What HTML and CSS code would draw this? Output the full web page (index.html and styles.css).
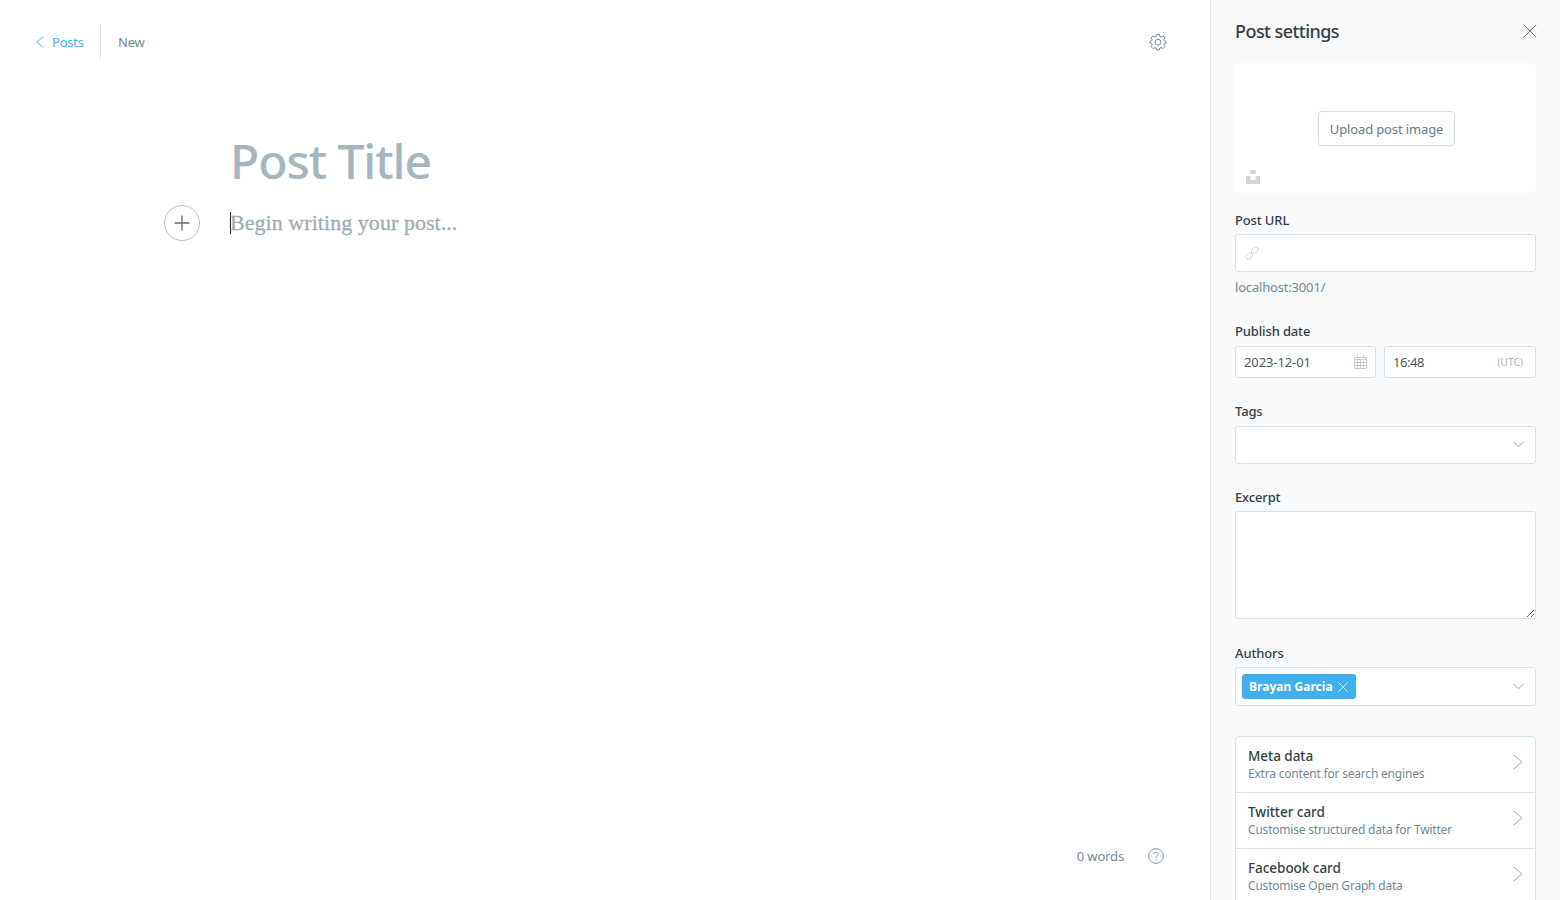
FILE: index.html
```html
<!DOCTYPE html>
<html lang="en">
<head>
<meta charset="utf-8">
<title>New post</title>
<link rel="stylesheet" href="styles.css">
</head>
<body>
<div class="app">
  <main class="editor">
    <header class="topbar">
      <a class="back"><svg class="back-icon" width="8" height="12" viewBox="0 0 8 12"><path d="M7.500 .5 .7 6 7.500 11.500"/></svg><span class="t-posts">Posts</span></a>
      <span class="divider"></span>
      <span class="status t-new">New</span>
      <svg class="gear" width="18" height="18" viewBox="0 0 18 18"><path d="M7.600 1.500h2.800l.6 2.100 1.100.5 2-1.100 1.800 1.900-1.100 1.900.5 1.100 1.700.5v1.700l-1.700.6-.5 1.100 1.100 1.900-1.900 1.900-1.900-1.100-1.100.5-.6 1.900H7.600L7 15l-1.100-.5-1.900 1.100-1.900-1.900 1.100-1.900-.5-1.100-1.700-.6V8.400l1.700-.5.5-1.100-1.100-1.900L4 3l1.900 1.100L7 3.600z"/><circle cx="9" cy="9.200" r="2.900"/></svg>
    </header>
    <section class="writing">
      <h1 class="title"><span class="t-title">Post Title</span></h1>
      <div class="body-row">
        <span class="plus"><svg width="16" height="16" viewBox="0 0 16 16"><path d="M8 .5v15M.5 8h15"/></svg></span>
        <span class="caret"></span><span class="placeholder t-begin">Begin writing your post...</span>
      </div>
    </section>
    <footer class="bottom">
      <span class="t-words">0 words</span>
      <svg class="help" width="16" height="16" viewBox="0 0 17 17"><circle cx="8.500" cy="8.500" r="7.800"/><path d="M6.200 6.700c0-3 4.700-2.900 4.700 0 0 1.600-2.400 1.600-2.400 3.500M8.500 11.600v1.200"/></svg>
    </footer>
  </main>
  <aside class="settings">
    <div class="head"><h2><span class="t-settings">Post settings</span></h2><svg width="14" height="14" viewBox="0 0 14 14"><path d="M.8.8l12.400 12.400M13.200.8.8 13.200"/></svg></div>
    <div class="uploader">
      <span class="upload-btn"><span class="t-upload">Upload post image</span></span>
      <svg class="unsplash" width="14" height="14" viewBox="0 0 14 14"><path d="M4.400 0h5.200v4H4.400zM0 6h4.400v4h5.200V6H14v8H0z"/></svg>
    </div>
    <div class="field url">
      <label><span class="t-url">Post URL</span></label>
      <div class="input tall"><svg class="link" width="14" height="14" viewBox="0 0 14 14"><rect x="-3.600" y="-2.400" width="7.200" height="4.800" rx="2.400" transform="translate(4.200 9.800) rotate(-45)"/><rect x="-3.600" y="-2.400" width="7.200" height="4.800" rx="2.400" transform="translate(9.800 4.200) rotate(-45)"/><path d="M5 9l4-4"/></svg></div>
      <p class="hint"><span class="t-host">localhost:3001/</span></p>
    </div>
    <div class="field date">
      <label><span class="t-pub">Publish date</span></label>
      <div class="pair">
        <div class="input short d"><span class="t-date">2023-12-01</span><svg class="cal" width="13" height="14" viewBox="0 0 13 14"><path d="M.5 2.500h12v11H.5zM.5 4.500h12M.5 7.500h12M.5 10.500h12M3.500 4.500v9M6.500 4.500v9M9.500 4.500v9M3.500.5v2.500M9.500.5v2.500"/></svg></div>
        <div class="input short"><span class="t-time">16:48</span><span class="utc t-utc">(UTC)</span></div>
      </div>
    </div>
    <div class="field tags">
      <label><span class="t-tags">Tags</span></label>
      <div class="input tall select"><svg class="chev" width="11" height="7" viewBox="0 0 11 7"><path d="M.5.8l5 5 5-5"/></svg></div>
    </div>
    <div class="field excerpt">
      <label><span class="t-exc">Excerpt</span></label>
      <textarea class="area"></textarea>
    </div>
    <div class="field authors">
      <label><span class="t-auth">Authors</span></label>
      <div class="input author-box select"><span class="token"><span class="t-name">Brayan Garcia</span><svg width="10" height="10" viewBox="0 0 10 10"><path d="M.5.5l9 9M9.500.5l-9 9"/></svg></span><svg class="chev" width="11" height="7" viewBox="0 0 11 7"><path d="M.5.8l5 5 5-5"/></svg></div>
    </div>
    <nav class="cards">
      <a class="card"><span class="card-text"><b class="t-c1">Meta data</b><span class="sub t-s1">Extra content for search engines</span></span><svg width="10" height="16" viewBox="0 0 10 16"><path d="M.8 1l8.200 7-8.200 7"/></svg></a>
      <a class="card"><span class="card-text"><b class="t-c2">Twitter card</b><span class="sub t-s2">Customise structured data for Twitter</span></span><svg width="10" height="16" viewBox="0 0 10 16"><path d="M.8 1l8.200 7-8.200 7"/></svg></a>
      <a class="card"><span class="card-text"><b class="t-c3">Facebook card</b><span class="sub t-s3">Customise Open Graph data</span></span><svg width="10" height="16" viewBox="0 0 10 16"><path d="M.8 1l8.200 7-8.200 7"/></svg></a>
    </nav>
  </aside>
</div>
</body>
</html>
```
FILE: styles.css
```css
* { box-sizing: border-box; }
body { margin: 0; font-family: "Noto Sans", "Open Sans", sans-serif; font-size: 13px; color: #738a94; background: #fff; }
svg { display: block; fill: none; stroke: currentColor; flex: none; }
h1, h2, p { margin: 0; }
.app { display: flex; height: 900px; overflow: hidden; }
.editor { flex: 1; display: flex; flex-direction: column; }
.topbar { display: flex; align-items: center; height: 36px; margin: 24px 43px 0 36px; }
.back { display: flex; align-items: center; gap: 8px; color: #3eb0ef; width: 64px; }
.back-icon { stroke-width: .9; }
.t-posts, .t-new { letter-spacing: -.2px; }
.divider { width: 1px; height: 36px; background: #dfe9f1; margin-right: 17px; }
.gear { margin-left: auto; stroke: #738a94; stroke-width: 1; }
.writing { flex: 1; padding: 66px 0 0 230px; }
.title { font-size: 48px; line-height: 70px; font-weight: 500; color: #a6b5bd; height: 79px; letter-spacing: -1.070px; }
.body-row { display: flex; align-items: center; height: 36px; margin-left: -66px; }
.plus { width: 36px; height: 36px; border: 1px solid #b0c2cb; border-radius: 50%; display: grid; place-items: center; color: #5a6e78; margin-right: 30px; }
.plus svg { stroke-width: 1.300; }
.caret { width: 1px; height: 22px; background: #15212a; }
.placeholder { font-family: "Liberation Serif", serif; font-size: 22px; letter-spacing: .05px; color: #9baeb8; line-height: 26px; margin-left: -1px; -webkit-text-stroke: .3px #9baeb8; }
.bottom { display: flex; align-items: center; justify-content: flex-end; gap: 24px; height: 36px; margin: 0 46px 26px 0; }
.t-words { letter-spacing: -.15px; }
.help { stroke-width: .95; }
.settings { width: 350px; border-left: 1px solid #dfe9f1; background: #f9fafc; padding: 0 24px; }
.head { display: flex; align-items: center; justify-content: space-between; height: 63px; padding-bottom: 2px; color: #343f44; margin-right: -1px; }
.head h2 { font-size: 18px; font-weight: 500; line-height: 24px; letter-spacing: -.55px; }
.head svg { stroke: #5a6970; stroke-width: .9; }
.uploader { height: 130px; background: #fff; border-radius: 4px; position: relative; display: flex; justify-content: center; padding: 48px 0 0 2px; }
.upload-btn { width: 137px; height: 35px; border: 1px solid #d0dfe5; border-radius: 4px; display: grid; place-items: center; color: #667c86; padding-top: 1px; letter-spacing: -.13px; }
.unsplash { position: absolute; left: 11px; bottom: 9px; fill: #d3d3d3; stroke: none; }
.field label { display: block; height: 18px; line-height: 18px; font-weight: 500; color: #343f44; letter-spacing: -.14px; }
.input { background: #fff; border: 1px solid #d5e3ec; border-radius: 3px; display: flex; align-items: center; color: #4d5b61; padding: 0 11px 0 8px; }
.tall { height: 38px; }
.short { height: 32px; }
.url { padding-top: 18px; }
.url .input { margin-top: 5px; }
.link { stroke: #cfdfe9; margin-left: 1px; }
.hint { margin-top: 5px; line-height: 20px; color: #738a94; letter-spacing: -.18px; }
.date { padding-top: 25px; }
.pair { display: grid; grid-template-columns: 141px 152px; gap: 8px; margin-top: 6px; }
.pair .input { justify-content: space-between; }
.pair .d { padding-right: 8px; }
.t-date { letter-spacing: -.1px; }
.t-time { letter-spacing: -.45px; }
.cal { stroke: #b0c0c9; stroke-width: .8; }
.utc { font-size: 10.500px; color: #a9b7bf; margin-right: 1px; letter-spacing: -.1px; }
.tags { padding-top: 24px; }
.tags .input { margin-top: 6px; }
.chev { margin-left: auto; stroke: #8fa5b1; }
.tags .chev { margin-top: -1px; }
.excerpt { padding-top: 24px; }
.area { display: block; width: 100%; height: 108px; margin: 5px 0 0; border: 1px solid #d5e3ec; border-radius: 3px; background: #fff; outline: 0; }
.authors { padding-top: 25px; }
.author-box { height: 39px; margin-top: 5px; padding-left: 6px; }
.token { display: flex; align-items: center; justify-content: space-between; width: 114px; height: 25px; padding: 0 8px 0 7px; background: #3eb0ef; border-radius: 3px; color: #fff; font-weight: 700; font-size: 12px; letter-spacing: .03px; }
.token svg { stroke-width: .8; }
.cards { margin-top: 30px; border: 1px solid #d5e3ec; border-radius: 4px 4px 0 0; background: #fff; }
.card { display: flex; align-items: center; justify-content: space-between; height: 56px; padding: 0 12px; border-bottom: 1px solid #d5e3ec; }
.card > svg { stroke: #859ca7; stroke-width: .9; margin-top: -6px; }
.card-text { display: flex; flex-direction: column; align-items: flex-start; padding-bottom: 1px; }
.card-text b { font-weight: 500; font-size: 13.500px; line-height: 18px; color: #343f44; letter-spacing: -.04px; }
.sub { font-size: 12px; line-height: 17px; letter-spacing: -.2px; }
```
